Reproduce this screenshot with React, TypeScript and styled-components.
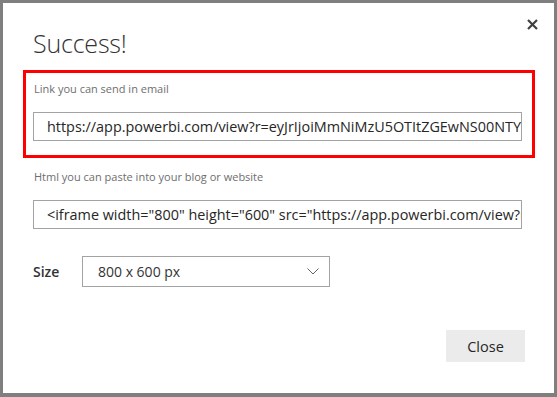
import styled, { createGlobalStyle } from "styled-components";

const GlobalStyle = createGlobalStyle`
  html, body {
    margin: 0;
    padding: 0;
    background: #ffffff;
  }
  body {
    font-family: "Open Sans", "Liberation Sans", sans-serif;
  }
`;

const Frame = styled.div`
  box-sizing: border-box;
  width: 557px;
  height: 397px;
  border: 3px solid #7f7f7f;
  border-bottom-width: 4px;
  background: #ffffff;
  display: flex;
  flex-direction: column;
  padding: 0 19px 0 20px;
`;

const Header = styled.div`
  display: flex;
  justify-content: space-between;
  align-items: flex-start;
  height: 67px;
`;

const Title = styled.h1`
  margin: 24px 0 0 10px;
  font-size: 25px;
  line-height: 32px;
  font-weight: 300;
  color: #333333;
  letter-spacing: -0.2px;
`;

const CloseIcon = styled.button`
  margin: 9px -9px 0 0;
  width: 24px;
  height: 24px;
  padding: 0;
  border: none;
  background: transparent;
  display: flex;
  align-items: center;
  justify-content: center;
  cursor: pointer;
`;

const Section = styled.div<{ $highlight?: boolean }>`
  box-sizing: border-box;
  border: 3px solid ${(p) => (p.$highlight ? "#ff0000" : "transparent")};
  padding: 8px 10px 14px 7px;
  display: flex;
  flex-direction: column;
`;

const Label = styled.div`
  font-size: 11px;
  line-height: 16px;
  color: #6e6e6e;
  margin: 0 0 0 1px;
  height: 31px;
`;

const TextBox = styled.div`
  box-sizing: border-box;
  height: 29px;
  border: 1px solid #a3a3a3;
  padding: 0 0 0 13px;
  font-size: 14.4px;
  line-height: 27px;
  color: #262626;
  white-space: nowrap;
  overflow: hidden;
`;

const SizeRow = styled.div`
  display: flex;
  align-items: center;
  margin: 10px 0 0 10px;
`;

const SizeLabel = styled.div`
  width: 49px;
  font-size: 14px;
  font-weight: 600;
  color: #333333;
`;

const Select = styled.div`
  box-sizing: border-box;
  width: 248px;
  height: 31px;
  border: 1px solid #a3a3a3;
  display: flex;
  align-items: center;
  justify-content: space-between;
  padding: 0 10px 0 15px;
  font-size: 14px;
  color: #333333;
`;

const Footer = styled.div`
  display: flex;
  justify-content: flex-end;
  margin: 43px 10px 0 0;
`;

const Button = styled.button`
  width: 79px;
  height: 32px;
  border: none;
  background: #ebebeb;
  font-family: "Open Sans", "Liberation Sans", sans-serif;
  font-size: 14.5px;
  color: #262626;
  cursor: pointer;
`;

export default function App() {
  return (
    <>
      <GlobalStyle />
      <Frame>
        <Header>
          <Title>Success!</Title>
          <CloseIcon aria-label="Close">
            <svg width="11" height="11" viewBox="0 0 11 11">
              <path d="M1 1 L10 10 M10 1 L1 10" stroke="#404040" strokeWidth="2.2" />
            </svg>
          </CloseIcon>
        </Header>
        <Section $highlight>
          <Label>Link you can send in email</Label>
          <TextBox>https://app.powerbi.com/view?r=eyJrIjoiMmNiMzU5OTItZGEwNS00NTYx</TextBox>
        </Section>
        <Section>
          <Label>Html you can paste into your blog or website</Label>
          <TextBox>{'<iframe width="800" height="600" src="https://app.powerbi.com/view?r'}</TextBox>
        </Section>
        <SizeRow>
          <SizeLabel>Size</SizeLabel>
          <Select>
            <span>800 x 600 px</span>
            <svg width="12" height="7" viewBox="0 0 12 7">
              <polyline points="0.5,0.5 6,6 11.5,0.5" fill="none" stroke="#666666" strokeWidth="1" />
            </svg>
          </Select>
        </SizeRow>
        <Footer>
          <Button>Close</Button>
        </Footer>
      </Frame>
    </>
  );
}
